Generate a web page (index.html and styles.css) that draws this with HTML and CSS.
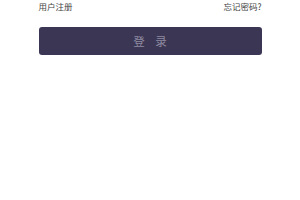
FILE: index.html
```html
<!DOCTYPE html>
<html lang="zh-CN">
<head>
  <meta charset="UTF-8" />
  <title>登录</title>
  <link rel="stylesheet" href="styles.css">
</head>
<body>
  <div class="login-box">
    <!-- links row -->
    <div class="links">
      <a href="#" class="link">用户注册</a>
      <a href="#" class="link">忘记密码?</a>
    </div>
    <button class="login-btn">登 录</button>
  </div>
</body>
</html>
```

FILE: styles.css
```css
* {
  margin: 0;
  padding: 0;
  box-sizing: border-box;
}

html, body {
  background-color: #fff;
  font-family: 'Noto Sans CJK SC', 'Noto Sans', sans-serif;
}

.login-box {
  width: 223px;
  margin: 0 auto;
}

.links {
  display: flex;
  justify-content: space-between;
  height: 12px;
  line-height: 12px;
}

.link {
  font-size: 8.5px;
  color: #444;
  text-decoration: none;
}

.login-btn {
  display: block;
  width: 100%;
  height: 28px;
  margin-top: 15px;
  background-color: #3b3653;
  border: none;
  border-radius: 3px;
  color: #8f8ba2;
  font-family: inherit;
  font-size: 11.5px;
  letter-spacing: 4px;
  text-indent: 4px;
  cursor: pointer;
}
```
